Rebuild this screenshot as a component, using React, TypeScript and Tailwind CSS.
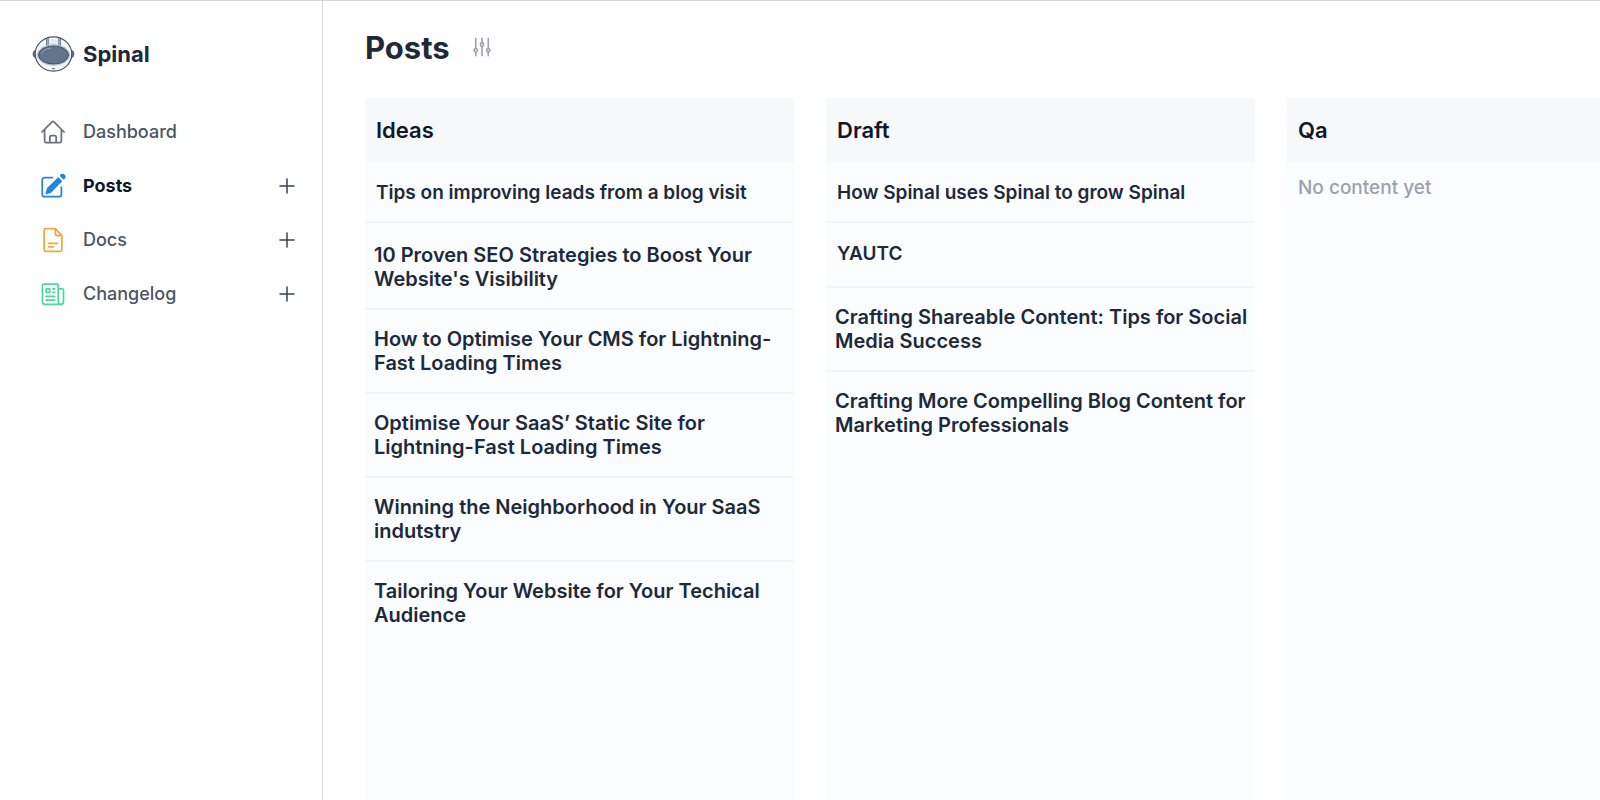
import type { ReactNode } from "react";

function Svg({ children, className }: { children: ReactNode; className: string }) {
  return (
    <svg
      viewBox="0 0 24 24"
      fill="none"
      stroke="currentColor"
      strokeWidth="1.5"
      strokeLinecap="round"
      strokeLinejoin="round"
      aria-hidden="true"
      className={className}
    >
      {children}
    </svg>
  );
}

function Logo() {
  return (
    <svg viewBox="0 0 44 38" fill="none" aria-hidden="true" className="h-[38px] w-[43px] shrink-0">
      <path d="M4 15C2 15.500 1.200 17 1.200 19s.8 3.500 2.800 4zM40 15c2 .5 2.800 2 2.800 4s-.8 3.500-2.800 4z" fill="#64748b" stroke="#3b485b" strokeWidth="0.900" />
      <ellipse cx="22" cy="19" rx="18.700" ry="17.500" fill="#f4f6f9" stroke="#4b5563" strokeWidth="1.200" />
      <path d="M15.500 3.500h13v7.500h-13z" fill="#e8ecf2" />
      <path d="M15 3v8M16.500 2.500v7.500M27.500 2.500v7.500M29 3v8" stroke="#334155" strokeWidth="0.800" />
      <ellipse cx="22" cy="20" rx="16.600" ry="10.500" fill="#e8ecf2" stroke="#94a3b8" strokeWidth="0.700" />
      <ellipse cx="22" cy="20" rx="15.300" ry="9.300" fill="#64748b" stroke="#334155" strokeWidth="0.900" />
      <path d="M9.500 18.500c1.500-3 5-5 9.500-5.600" stroke="#a3b0c2" strokeWidth="0.800" strokeLinecap="round" />
      <path d="M20.500 34h3" stroke="#64748b" strokeWidth="1.200" />
    </svg>
  );
}

const navItems = [
  {
    label: "Dashboard",
    add: false,
    icon: (
      <Svg className="size-7 text-gray-500">
        <path d="M2.500 12 11.200 3.300a1.150 1.150 0 0 1 1.600 0L21.500 12M4.800 9.800v10.100c0 .6.500 1.100 1.100 1.100h12.200c.6 0 1.100-.5 1.100-1.100V9.800M9.300 21v-4.900c0-.6.500-1.100 1.100-1.100h3.200c.6 0 1.100.5 1.100 1.100V21" />
      </Svg>
    ),
  },
  {
    label: "Posts",
    add: true,
    icon: (
      <Svg className="size-7 text-[#2186dc]">
        <path d="M11.500 4.800H4.700a1.900 1.900 0 0 0-1.900 1.900v12.600c0 1 .9 1.900 1.900 1.900h12.600a1.900 1.900 0 0 0 1.900-1.900V13" />
        <path d="m16.500 5.400 2.500 2.500L10 17l-3.600 1.300L7.600 14z" fill="currentColor" />
        <path d="m18.600 3.200 2.500 2.500c1.300-1.100 1.200-2.100.5-2.800s-1.900-.9-3 .3z" fill="currentColor" />
      </Svg>
    ),
  },
  {
    label: "Docs",
    add: true,
    icon: (
      <Svg className="size-7 text-[#f2a93b]">
        <path d="M14 2.300H5.500c-.6 0-1.100.5-1.100 1.100v17.200c0 .6.500 1.100 1.100 1.100h13c.6 0 1.100-.5 1.100-1.100V8.200zM14 2.300v4.400c0 .8.700 1.500 1.500 1.500h4.100M8.300 14.800h7.400M8.300 17.800h4" />
      </Svg>
    ),
  },
  {
    label: "Changelog",
    add: true,
    icon: (
      <Svg className="size-7 text-[#4fd79b]">
        <path d="M16.500 7.500h3.400c.6 0 1.100.5 1.100 1.100v10.100a2.200 2.200 0 0 1-4.500 0V4.600c0-.6-.5-1.100-1.100-1.100H4.100C3.500 3.500 3 4 3 4.600v14.100a2.200 2.200 0 0 0 2.200 2.200h13.500M6 14h7.500M6 17.200h7.500M12 7.500h1.500M12 10.500h1.500M6.200 7.500h3v3h-3z" />
      </Svg>
    ),
  },
];

type Post = { title: string; compact?: boolean; spacing?: string };

const columns: { name: string; posts: Post[] }[] = [
  {
    name: "Ideas",
    posts: [
      { title: "Tips on improving leads from a blog visit", compact: true },
      { title: "10 Proven SEO Strategies to Boost Your Website's Visibility", spacing: "pt-[3px]" },
      { title: "How to Optimise Your CMS for Lightning-Fast Loading Times" },
      { title: "Optimise Your SaaS’ Static Site for Lightning-Fast Loading Times" },
      { title: "Winning the Neighborhood in Your SaaS indutstry" },
      { title: "Tailoring Your Website for Your Techical Audience" },
    ],
  },
  {
    name: "Draft",
    posts: [
      { title: "How Spinal uses Spinal to grow Spinal", compact: true },
      { title: "YAUTC", compact: true, spacing: "pb-1" },
      { title: "Crafting Shareable Content: Tips for Social Media Success" },
      { title: "Crafting More Compelling Blog Content for Marketing Professionals" },
    ],
  },
  { name: "Qa", posts: [] },
];

function Sidebar() {
  return (
    <aside className="w-[323px] shrink-0 border-r border-[#dcdcde] pt-[34px] pr-[23px] pl-8">
      <a href="#home" className="flex items-center gap-2 text-[22px] leading-[38px] font-bold text-gray-800">
        <Logo />
        Spinal
      </a>
      <nav className="mt-8 flex flex-col">
        {navItems.map((item) => (
          <div key={item.label} className="flex h-[54px] items-center justify-between">
            <a
              href={"#" + item.label.toLowerCase()}
              className={
                item.label === "Posts"
                  ? "flex items-center gap-4 pl-[7px] text-lg font-bold text-gray-900"
                  : "flex items-center gap-4 pl-[7px] text-lg font-medium text-gray-600"
              }
            >
              {item.icon}
              {item.label}
            </a>
            {item.add && (
              <button type="button" aria-label={"Add to " + item.label} className="text-gray-700">
                <Svg className="size-6">
                  <path d="M12 5v14M5 12h14" />
                </Svg>
              </button>
            )}
          </div>
        ))}
      </nav>
    </aside>
  );
}

function Column({ name, posts }: { name: string; posts: Post[] }) {
  return (
    <section className="w-[429px] shrink-0 bg-[#fbfcfe]">
      <h2 className="bg-[#f7f8fa] px-[11px] py-4 text-[22px] leading-8 font-semibold text-gray-900">{name}</h2>
      {posts.length === 0 && (
        <p className="px-[11px] py-3 text-[19px] leading-7 font-medium text-gray-400">No content yet</p>
      )}
      <ul className="divide-y-2 divide-gray-100">
        {posts.map((post) => (
          <li key={post.title} className={post.spacing}>
            <a
              href="#post"
              className={
                post.compact
                  ? "block px-[11px] pt-[17px] pb-[14px] text-[19px] leading-7 font-semibold text-gray-800"
                  : "block py-[17px] pr-1 pl-[9px] text-xl leading-6 font-semibold text-gray-800"
              }
            >
              {post.title}
            </a>
          </li>
        ))}
      </ul>
    </section>
  );
}

export default function App() {
  return (
    <div className="flex min-h-screen border-t border-[#d4d4d6] bg-white font-['Inter',sans-serif]">
      <Sidebar />
      <main className="flex min-w-0 flex-1 flex-col pl-[42px]">
        <header className="flex items-center gap-[22px] pt-6 pb-7">
          <h1 className="text-[31px] leading-[45px] font-bold text-gray-800">Posts</h1>
          <button type="button" aria-label="Filter posts" className="pb-[2px] text-gray-400">
            <Svg className="size-5">
              <g strokeWidth="1.900">
                <path d="M4.500 1.500V14M4.500 18v4.500M12 1.500V7M12 11v11.500M19.500 1.500V14M19.500 18v4.500" />
                <circle cx="4.500" cy="16" r="2" />
                <circle cx="12" cy="9" r="2" />
                <circle cx="19.500" cy="16" r="2" />
              </g>
            </Svg>
          </button>
        </header>
        <div className="flex flex-1 gap-8 overflow-x-auto [scrollbar-width:none]">
          {columns.map((column) => (
            <Column key={column.name} name={column.name} posts={column.posts} />
          ))}
        </div>
      </main>
    </div>
  );
}
